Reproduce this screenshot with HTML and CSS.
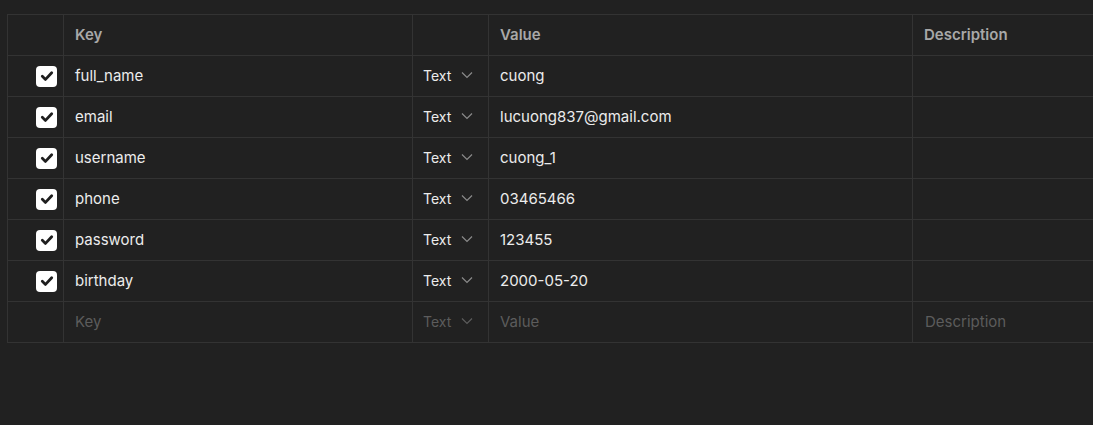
FILE: index.html
```html
<!DOCTYPE html>
<html>
<head>
<meta charset="utf-8">
<link rel="stylesheet" href="styles.css">
</head>
<body>
<div class="table">
  <div class="cell head"></div>
  <div class="cell head">Key</div>
  <div class="cell head"></div>
  <div class="cell head">Value</div>
  <div class="cell head">Description</div>

  <div class="cell chk"><span class="box"><svg viewBox="0 0 20 20" width="20" height="20"><path d="M5.3 10.3l3.2 3.1 6.2-6.6" fill="none" stroke="#1e1e1e" stroke-width="2.8" stroke-linecap="round" stroke-linejoin="round"/></svg></span></div>
  <div class="cell">full_name</div>
  <div class="cell type">Text<svg class="chev" viewBox="0 0 12 8" width="12" height="8"><path d="M1 1.5l5 5 5-5" fill="none" stroke="currentColor" stroke-width="1.2"/></svg></div>
  <div class="cell">cuong</div>
  <div class="cell"></div>

  <div class="cell chk"><span class="box"><svg viewBox="0 0 20 20" width="20" height="20"><path d="M5.3 10.3l3.2 3.1 6.2-6.6" fill="none" stroke="#1e1e1e" stroke-width="2.8" stroke-linecap="round" stroke-linejoin="round"/></svg></span></div>
  <div class="cell">email</div>
  <div class="cell type">Text<svg class="chev" viewBox="0 0 12 8" width="12" height="8"><path d="M1 1.5l5 5 5-5" fill="none" stroke="currentColor" stroke-width="1.2"/></svg></div>
  <div class="cell">lucuong837@gmail.com</div>
  <div class="cell"></div>

  <div class="cell chk"><span class="box"><svg viewBox="0 0 20 20" width="20" height="20"><path d="M5.3 10.3l3.2 3.1 6.2-6.6" fill="none" stroke="#1e1e1e" stroke-width="2.8" stroke-linecap="round" stroke-linejoin="round"/></svg></span></div>
  <div class="cell">username</div>
  <div class="cell type">Text<svg class="chev" viewBox="0 0 12 8" width="12" height="8"><path d="M1 1.5l5 5 5-5" fill="none" stroke="currentColor" stroke-width="1.2"/></svg></div>
  <div class="cell">cuong_1</div>
  <div class="cell"></div>

  <div class="cell chk"><span class="box"><svg viewBox="0 0 20 20" width="20" height="20"><path d="M5.3 10.3l3.2 3.1 6.2-6.6" fill="none" stroke="#1e1e1e" stroke-width="2.8" stroke-linecap="round" stroke-linejoin="round"/></svg></span></div>
  <div class="cell">phone</div>
  <div class="cell type">Text<svg class="chev" viewBox="0 0 12 8" width="12" height="8"><path d="M1 1.5l5 5 5-5" fill="none" stroke="currentColor" stroke-width="1.2"/></svg></div>
  <div class="cell">03465466</div>
  <div class="cell"></div>

  <div class="cell chk"><span class="box"><svg viewBox="0 0 20 20" width="20" height="20"><path d="M5.3 10.3l3.2 3.1 6.2-6.6" fill="none" stroke="#1e1e1e" stroke-width="2.8" stroke-linecap="round" stroke-linejoin="round"/></svg></span></div>
  <div class="cell">password</div>
  <div class="cell type">Text<svg class="chev" viewBox="0 0 12 8" width="12" height="8"><path d="M1 1.5l5 5 5-5" fill="none" stroke="currentColor" stroke-width="1.2"/></svg></div>
  <div class="cell">123455</div>
  <div class="cell"></div>

  <div class="cell chk"><span class="box"><svg viewBox="0 0 20 20" width="20" height="20"><path d="M5.3 10.3l3.2 3.1 6.2-6.6" fill="none" stroke="#1e1e1e" stroke-width="2.8" stroke-linecap="round" stroke-linejoin="round"/></svg></span></div>
  <div class="cell">birthday</div>
  <div class="cell type">Text<svg class="chev" viewBox="0 0 12 8" width="12" height="8"><path d="M1 1.5l5 5 5-5" fill="none" stroke="currentColor" stroke-width="1.2"/></svg></div>
  <div class="cell">2000-05-20</div>
  <div class="cell"></div>

  <div class="cell"></div>
  <div class="cell ph">Key</div>
  <div class="cell type ph">Text<svg class="chev" viewBox="0 0 12 8" width="12" height="8"><path d="M1 1.5l5 5 5-5" fill="none" stroke="currentColor" stroke-width="1.2"/></svg></div>
  <div class="cell ph">Value</div>
  <div class="cell ph desc">Description</div>
</div>
</body>
</html>
```
FILE: styles.css
```css
html, body {
  margin: 0;
  padding: 0;
  background: #212121;
  overflow: hidden;
}
body {
  padding: 14px 0 0 7px;
  font-family: Inter, "Noto Sans", sans-serif;
  font-size: 15px;
  color: #ececec;
  width: 1200px;
}
.table {
  display: grid;
  grid-template-columns: 56px 349px 76px 424px 220px;
  grid-auto-rows: 41px;
  border-top: 1px solid #333333;
  border-left: 1px solid #333333;
  width: max-content;
}
.cell {
  border-right: 1px solid #333333;
  border-bottom: 1px solid #333333;
  display: flex;
  align-items: center;
  padding-left: 11px;
  padding-bottom: 2px;
  white-space: nowrap;
}
.head {
  font-weight: 600;
  color: #a8a8a8;
}
.chk {
  padding-left: 0;
  padding-bottom: 0;
  justify-content: flex-end;
  padding-right: 6px;
}
.box {
  width: 21px;
  height: 21px;
  background: #ffffff;
  border-radius: 4px;
  display: flex;
  align-items: center;
  justify-content: center;
}
.type {
  justify-content: flex-start;
  font-size: 14px;
  padding-left: 10px;
}
.chev {
  margin-left: 10px;
  color: #8a8a8a;
}
.ph {
  color: #5c5c5c;
}
.ph .chev {
  color: #5c5c5c;
}
.desc {
  padding-left: 12px;
}
```
